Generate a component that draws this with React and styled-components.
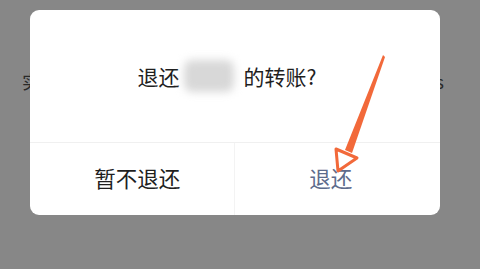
import React from 'react';
import styled, { createGlobalStyle } from 'styled-components';

const GlobalStyle = createGlobalStyle`
  html, body {
    margin: 0;
    padding: 0;
    background: #878787;
  }
  body {
    font-family: "Noto Sans CJK SC", "Noto Sans", sans-serif;
  }
`;

const Screen = styled.div`
  position: relative;
  width: 480px;
  height: 269px;
  overflow: hidden;
  background: #878787;
`;

const PageRow = styled.div`
  display: flex;
  justify-content: space-between;
  padding: 68px 36px 0 22px;
  font-size: 18px;
  color: #2a2a2a;
`;

const Overlay = styled.div`
  position: absolute;
  inset: 0;
  display: flex;
  padding: 10px 0 0 30px;
`;

const Dialog = styled.div`
  position: relative;
  width: 410px;
  height: 205px;
  background: #ffffff;
  border-radius: 9px;
  display: flex;
  flex-direction: column;
  overflow: hidden;
`;

const Body = styled.div`
  height: 132px;
  display: flex;
  align-items: center;
  justify-content: center;
  padding-right: 16px;
  font-size: 21px;
  color: #1f1f1f;
  border-bottom: 1px solid #f0f0f0;
`;

const Blurred = styled.span`
  display: inline-block;
  width: 50px;
  height: 32px;
  margin: 0 10px 0 4px;
  background: #d8d8d8;
  border-radius: 8px;
  filter: blur(4px);
`;

const Footer = styled.div`
  flex: 1;
  display: flex;
`;

const Action = styled.div`
  flex: 1;
  display: flex;
  align-items: center;
  justify-content: center;
  padding: ${p => (p.primary ? '0 13px 4px 0' : '0 0 4px 11px')};
  font-size: 21.5px;
  color: ${p => (p.primary ? '#5d6b8c' : '#1f1f1f')};
  border-left: ${p => (p.primary ? '1px solid #f3f3f3' : 'none')};
`;

const Arrow = styled.svg`
  position: absolute;
  left: 0;
  top: 0;
  pointer-events: none;
`;

function App() {
  return (
    <Screen>
      <GlobalStyle />
      <PageRow>
        <span>实</span>
        <span>s</span>
      </PageRow>
      <Overlay>
        <Dialog>
          <Body>
            <span>退还</span>
            <Blurred />
            <span>的转账?</span>
          </Body>
          <Footer>
            <Action>暂不退还</Action>
            <Action primary>退还</Action>
          </Footer>
        </Dialog>
      </Overlay>
      <Arrow width="480" height="269" viewBox="0 0 480 269">
        <polygon points="383,55 385,57 352,153 345,150" fill="#f2693a" />
        <polygon
          points="336,149 357,158 338,171"
          fill="none"
          stroke="#f2693a"
          strokeWidth="3"
          strokeLinejoin="round"
        />
      </Arrow>
    </Screen>
  );
}

export default App;
